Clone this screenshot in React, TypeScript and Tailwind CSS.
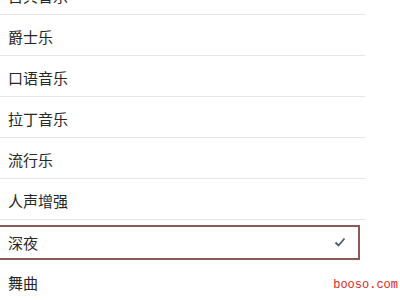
import React from "react";

const items = ["古典音乐", "爵士乐", "口语音乐", "拉丁音乐", "流行乐", "人声增强", "深夜", "舞曲"];

export default function App() {
  return (
    <div
      className="relative w-[400px] h-[300px] overflow-hidden bg-white"
      style={{ fontFamily: '"Noto Sans CJK SC", "Noto Sans", sans-serif' }}
    >
      <div className="flex flex-col w-[365px] -mt-[26px]">
        {items.map((t, i) => (
          <div
            key={t}
            className={`relative flex items-center h-[41px] pl-[8px] pt-[5px] text-[15px] text-[#262626] ${
              i === 6 ? "" : "border-b border-[#e6e6e6]"
            }`}
          >
            {t}
            {i === 6 && (
              <>
                <div className="absolute left-[-2px] right-[5px] top-[5px] bottom-[1px] border-2 border-[#8c5a55]" />
                <svg
                  className="absolute right-[19px] top-[17px]"
                  width="12"
                  height="10"
                  viewBox="0 0 12 10"
                >
                  <path d="M1.5 5.5 L4.5 8.5 L10.5 1.5" fill="none" stroke="#4b5b6e" strokeWidth="1.8" />
                </svg>
              </>
            )}
          </div>
        ))}
      </div>
      <div
        className="absolute right-[2px] bottom-[9px] text-[12px] leading-none text-[#d81e1e]"
        style={{ fontFamily: '"Liberation Mono", monospace' }}
      >
        booso.com
      </div>
    </div>
  );
}
